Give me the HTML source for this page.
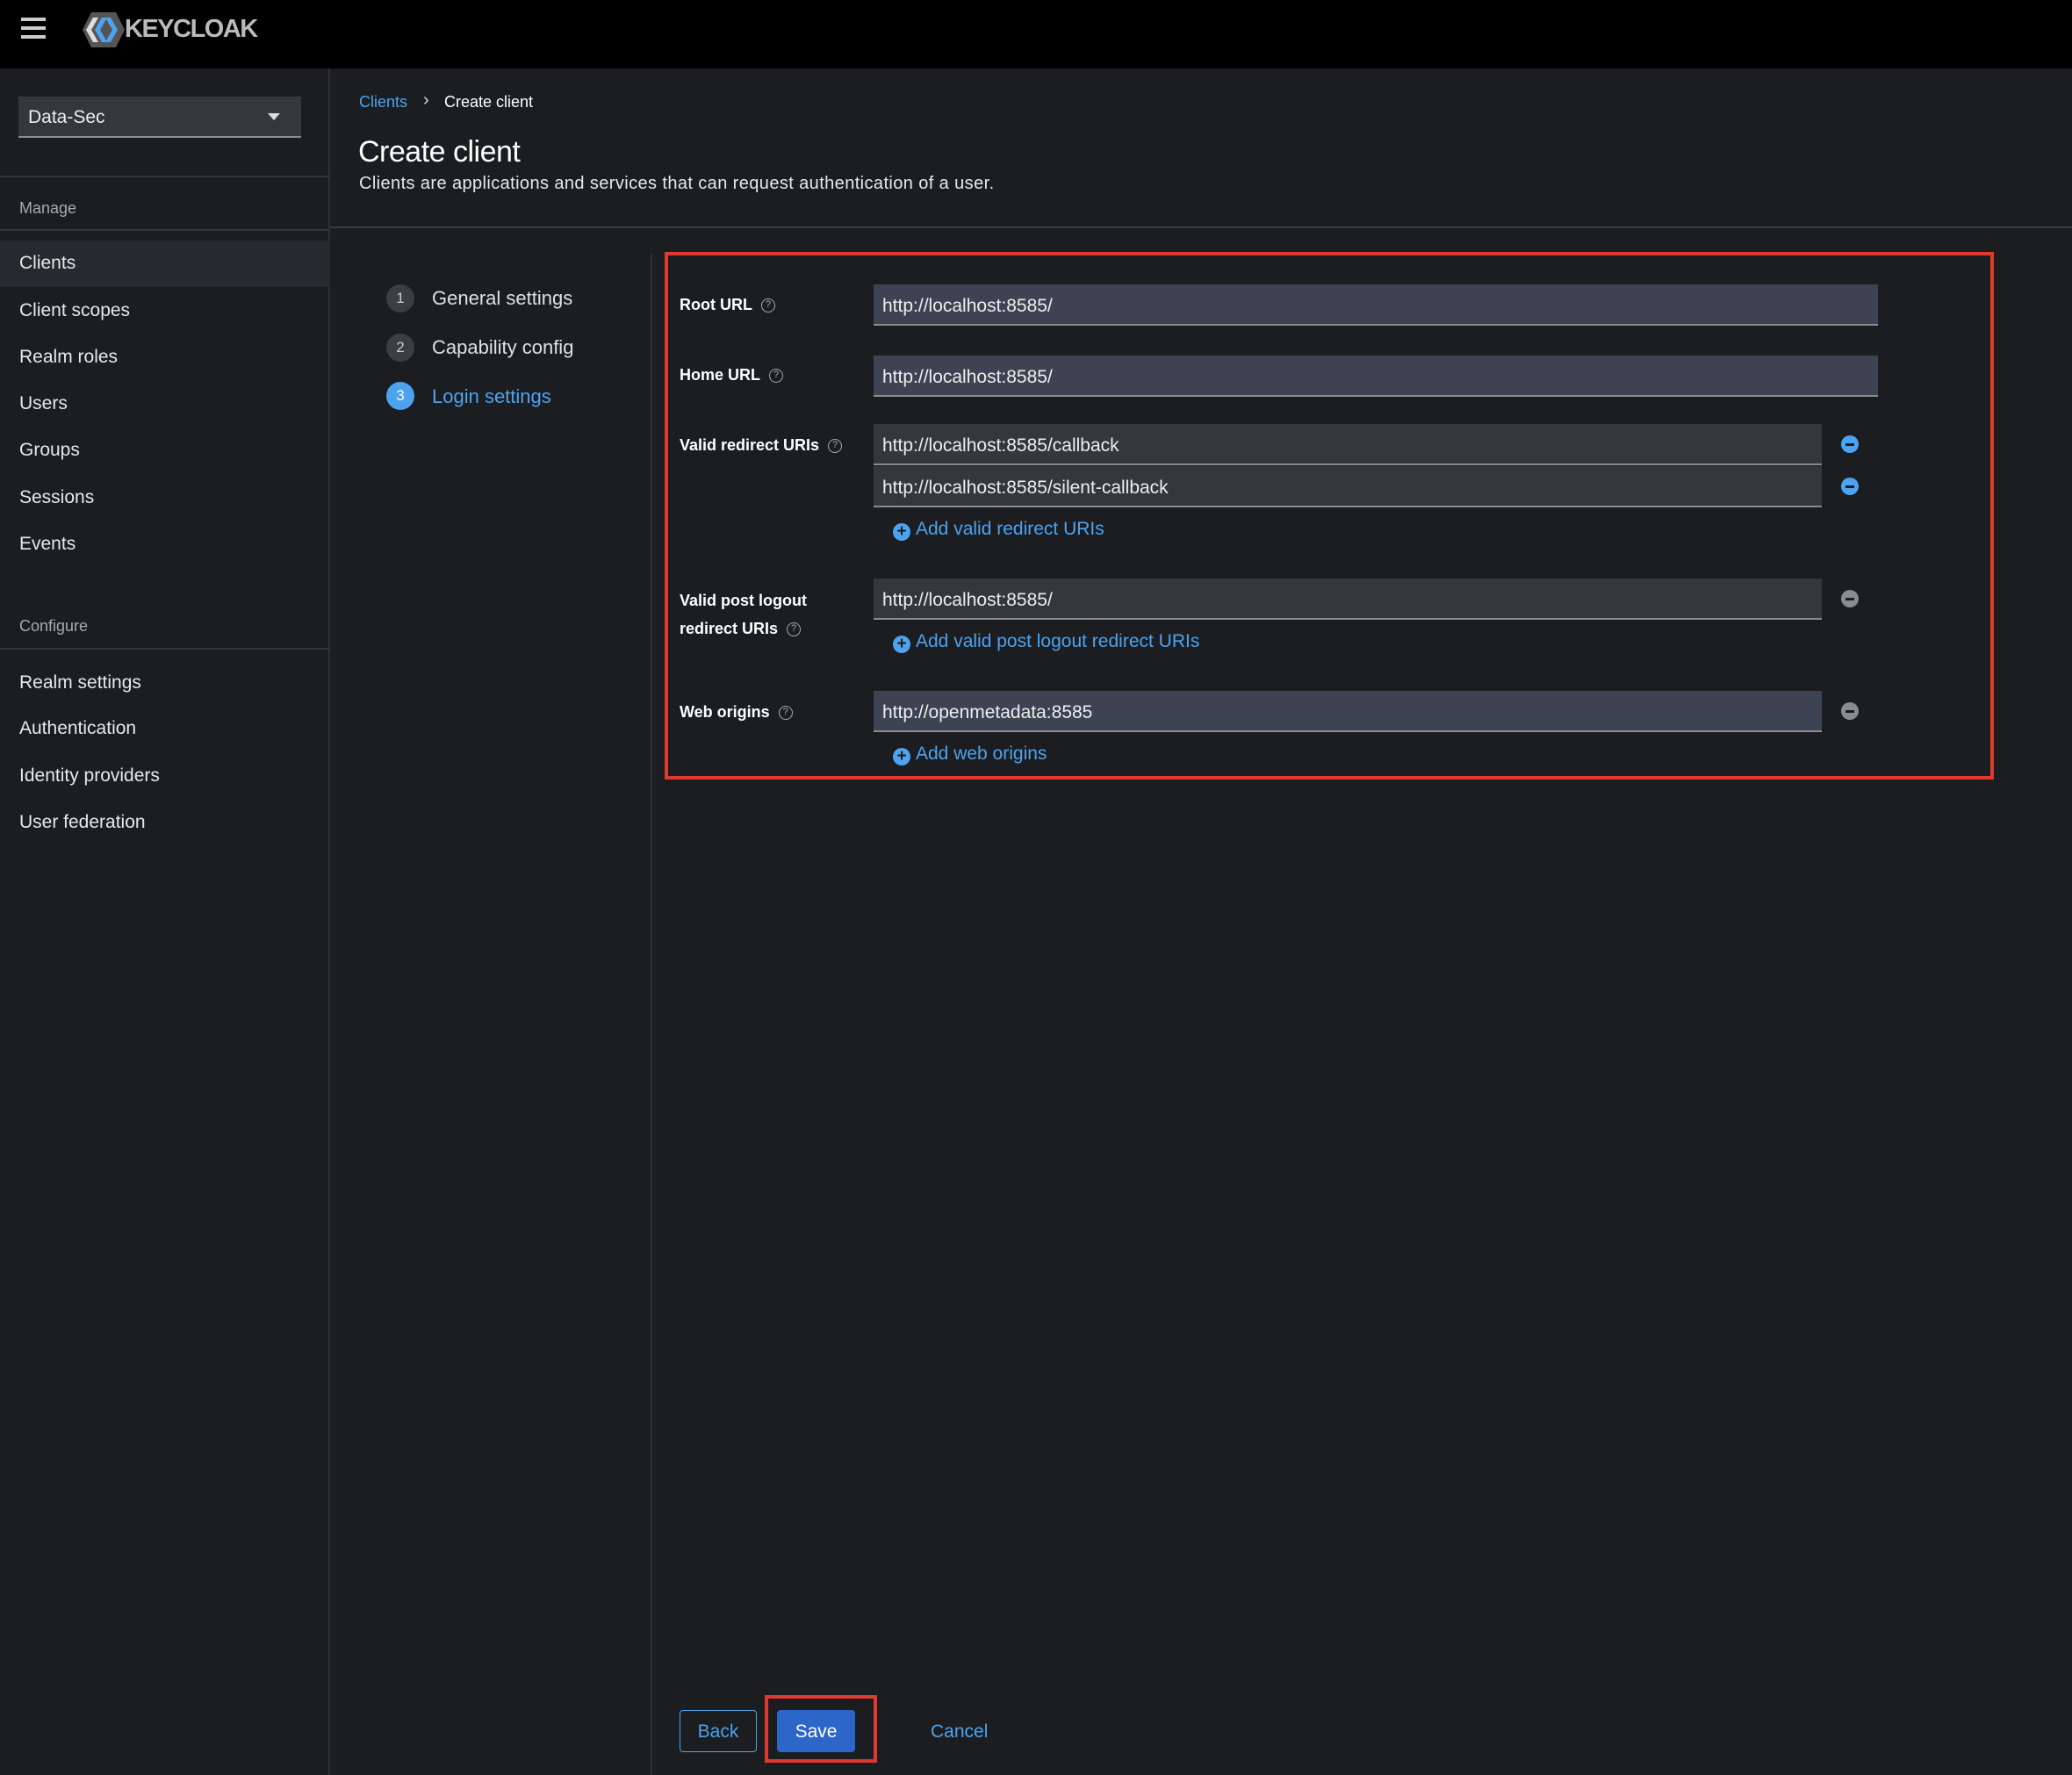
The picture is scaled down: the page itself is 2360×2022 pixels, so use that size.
<!DOCTYPE html>
<html><head><meta charset="utf-8"><style>
*{box-sizing:border-box;margin:0;padding:0}
body{width:2360px;height:2022px;background:#1b1d21;font-family:"Liberation Sans",sans-serif;color:#e0e0e0;position:relative;overflow:hidden}
.a{position:absolute}
.hdr{left:0;top:0;width:2360px;height:78px;background:#000}
.side{left:0;top:78px;width:376px;height:1944px;border-right:2px solid #2e3034}
.nav{left:22px;font-size:21px;color:#e8e8e8}
.line{height:2px;background:#34363a}
.inp{height:47px;border-bottom:2px solid #8a8d90;font-size:21px;color:#eee;padding:13px 10px;background:#3d4352}
.g{background:#36373b}
.lbl{left:774px;font-size:18px;font-weight:bold;color:#fff}
.q{display:inline-block;width:16px;height:16px;border:1.5px solid #aaa;border-radius:50%;font-size:11px;text-align:center;line-height:13px;color:#aaa;margin-left:10px;vertical-align:middle;font-weight:normal}
.link{left:1017px;font-size:21px;color:#4da3ef}
.link i{display:inline-block;width:20px;height:20px;border-radius:50%;background:#4da3ef;color:#1b1d21;font-style:normal;font-weight:bold;font-size:19px;line-height:20px;text-align:center;margin-right:6px;vertical-align:-2px}
.min{left:2097px;width:20px;height:20px;border-radius:50%;background:#4da3ef}
.min:after{content:"";position:absolute;left:5px;top:8.5px;width:10px;height:3px;background:#1b1d21}
.min.gr{background:#8a8d90}
.step{left:440px;width:32px;height:32px;border-radius:50%;background:#3c3f42;color:#ccc;font-size:17px;text-align:center;line-height:32px}
.st{left:492px;font-size:22px;color:#e0e0e0}
</style></head><body>
<div class="a hdr"></div>
<div class="a" style="left:24px;top:20px;width:28px;height:4px;background:#ccc;box-shadow:0 10px 0 #ccc,0 20px 0 #ccc"></div>
<svg class="a" style="left:92px;top:12px" width="52" height="44" viewBox="0 0 52 44"><polygon points="12,2 40,2 50,22 40,42 12,42 2,22" fill="#555"/><polygon points="14,8 20,8 12,22 20,36 14,36 6,22" fill="#ddd"/><polygon points="24,8 30,8 22,22 30,36 24,36 16,22" fill="#4da3ef"/><polygon points="28,8 34,8 42,22 34,36 28,36 36,22" fill="#4da3ef"/></svg>
<div class="a" style="left:142px;top:17px;font-size:29px;font-weight:bold;color:#bbb;letter-spacing:-1.5px">KEYCLOAK</div>
<div class="a side"></div>
<div class="a" style="left:21px;top:110px;width:322px;height:47px;background:#36373b;border-bottom:2px solid #8a8d90;font-size:21px;padding:12px 11px;color:#eee">Data-Sec</div>
<div class="a" style="left:305px;top:129px;border-left:7px solid transparent;border-right:7px solid transparent;border-top:8px solid #ddd"></div>
<div class="a line" style="left:0;top:200px;width:376px"></div>
<div class="a" style="left:22px;top:227px;font-size:18px;color:#aaa">Manage</div>
<div class="a line" style="left:0;top:261px;width:376px"></div>
<div class="a" style="left:0;top:274px;width:376px;height:53px;background:#27292e"></div>
<div class="a nav" style="top:288px">Clients</div>
<div class="a nav" style="top:342px">Client scopes</div>
<div class="a nav" style="top:395px">Realm roles</div>
<div class="a nav" style="top:448px">Users</div>
<div class="a nav" style="top:501px">Groups</div>
<div class="a nav" style="top:555px">Sessions</div>
<div class="a nav" style="top:608px">Events</div>
<div class="a" style="left:22px;top:703px;font-size:18px;color:#aaa">Configure</div>
<div class="a line" style="left:0;top:738px;width:376px"></div>
<div class="a nav" style="top:766px">Realm settings</div>
<div class="a nav" style="top:818px">Authentication</div>
<div class="a nav" style="top:872px">Identity providers</div>
<div class="a nav" style="top:925px">User federation</div>

<div class="a" style="left:409px;top:106px;font-size:18px;color:#4da3ef">Clients</div>
<div class="a" style="left:482px;top:103px;font-size:20px;color:#ddd">›</div>
<div class="a" style="left:506px;top:106px;font-size:18px;color:#fff">Create client</div>
<div class="a" style="left:408px;top:154px;font-size:34px;color:#fff;letter-spacing:-0.5px">Create client</div>
<div class="a" style="left:409px;top:198px;font-size:20px;color:#e8e8e8;letter-spacing:0.4px">Clients are applications and services that can request authentication of a user.</div>
<div class="a line" style="left:376px;top:258px;width:1984px;background:#3a3c40"></div>
<div class="a" style="left:741px;top:289px;width:2px;height:1733px;background:#2e3034"></div>

<div class="a step" style="top:324px">1</div><div class="a st" style="top:327px">General settings</div>
<div class="a step" style="top:380px">2</div><div class="a st" style="top:383px">Capability config</div>
<div class="a step" style="top:435px;background:#4da3ef;color:#fff">3</div><div class="a st" style="top:439px;color:#4da3ef">Login settings</div>

<div class="a" style="left:757px;top:287px;width:1514px;height:601px;border:4px solid #e03a2e"></div>

<div class="a lbl" style="top:337px">Root URL<span class="q">?</span></div>
<div class="a inp" style="left:995px;top:324px;width:1144px">http://localhost:8585/</div>
<div class="a lbl" style="top:417px">Home URL<span class="q">?</span></div>
<div class="a inp" style="left:995px;top:405px;width:1144px">http://localhost:8585/</div>
<div class="a lbl" style="top:497px">Valid redirect URIs<span class="q">?</span></div>
<div class="a inp g" style="left:995px;top:483px;width:1080px">http://localhost:8585/callback</div>
<div class="a inp g" style="left:995px;top:531px;width:1080px">http://localhost:8585/silent-callback</div>
<div class="a min" style="top:496px"></div>
<div class="a min" style="top:544px"></div>
<div class="a link" style="top:591px"><i>+</i>Add valid redirect URIs</div>
<div class="a lbl" style="top:668px;line-height:32px">Valid post logout<br>redirect URIs<span class="q">?</span></div>
<div class="a inp g" style="left:995px;top:659px;width:1080px">http://localhost:8585/</div>
<div class="a min gr" style="top:672px"></div>
<div class="a link" style="top:719px"><i>+</i>Add valid post logout redirect URIs</div>
<div class="a lbl" style="top:801px">Web origins<span class="q">?</span></div>
<div class="a inp" style="left:995px;top:787px;width:1080px">http://openmetadata:8585</div>
<div class="a min gr" style="top:800px"></div>
<div class="a link" style="top:847px"><i>+</i>Add web origins</div>

<div class="a" style="left:774px;top:1948px;width:88px;height:48px;border:1.5px solid #4da3ef;border-radius:4px;color:#4da3ef;font-size:21px;text-align:center;line-height:47px">Back</div>
<div class="a" style="left:871px;top:1931px;width:128px;height:77px;border:4px solid #e03a2e"></div>
<div class="a" style="left:885px;top:1948px;width:89px;height:48px;background:#2b66c8;border-radius:4px;color:#fff;font-size:21px;text-align:center;line-height:50px">Save</div>
<div class="a" style="left:1060px;top:1961px;font-size:21px;color:#4da3ef">Cancel</div>
</body></html>
